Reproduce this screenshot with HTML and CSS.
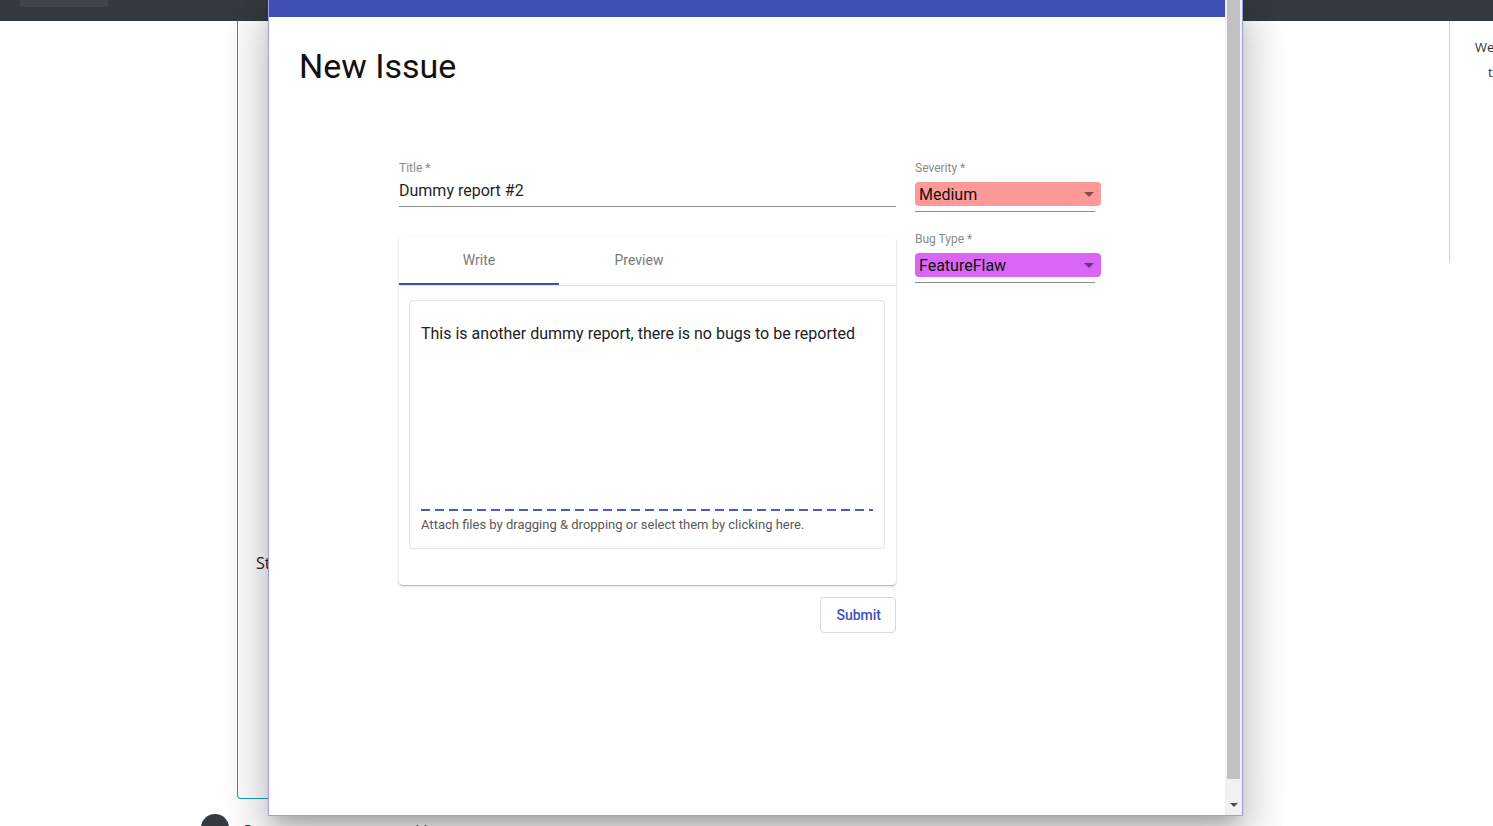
FILE: index.html
```html
<!DOCTYPE html>
<html lang="en">
<head>
<meta charset="utf-8">
<title>New Issue</title>
<link rel="stylesheet" href="styles.css">
</head>
<body>
  <header class="navbar"><div class="nav-item"></div></header>
  <div class="page">
    <div class="main">
      <div class="card">
        <p class="card-text">Status</p>
      </div>
      <div class="comment">
        <span class="avatar"></span>
        <span class="comment-text">Some users are now asking</span>
      </div>
    </div>
    <aside class="sidebar">
      <p class="side-line1">Welcome</p>
      <p class="side-line2">the</p>
    </aside>
  </div>

  <div class="modal">
    <div class="modal-content">
      <div class="modal-bar"></div>
      <h1 class="modal-title">New Issue</h1>
      <form class="issue-form">
        <div class="main-col">
          <label class="field-label">Title *</label>
          <div class="text-input">Dummy report #2</div>
          <div class="editor-paper">
            <div class="tabs">
              <div class="tab active">Write</div>
              <div class="tab">Preview</div>
            </div>
            <div class="editor">
              <div class="textarea">This is another dummy report, there is no bugs to be reported</div>
              <div class="drop-line"></div>
              <div class="attach">Attach files by dragging &amp; dropping or select them by clicking here.</div>
            </div>
          </div>
          <div class="actions">
            <button type="button" class="submit-btn">Submit</button>
          </div>
        </div>
        <div class="side-col">
          <div class="select-field">
            <label class="field-label">Severity *</label>
            <div class="select-box severity">
              <span>Medium</span>
              <svg class="caret" width="10" height="5" viewBox="0 0 10 5"><path d="M0 0h10L5 5z"/></svg>
            </div>
            <div class="select-underline"></div>
          </div>
          <div class="select-field">
            <label class="field-label">Bug Type *</label>
            <div class="select-box bugtype">
              <span>FeatureFlaw</span>
              <svg class="caret" width="10" height="5" viewBox="0 0 10 5"><path d="M0 0h10L5 5z"/></svg>
            </div>
            <div class="select-underline"></div>
          </div>
        </div>
      </form>
    </div>
    <div class="scrollbar">
      <div class="thumb"></div>
      <svg class="scroll-arrow" width="8" height="4" viewBox="0 0 8 4"><path d="M0 0h8L4 4z"/></svg>
    </div>
  </div>
</body>
</html>
```

FILE: styles.css
```css
html, body {
  margin: 0;
  padding: 0;
}
body {
  width: 1493px;
  height: 826px;
  overflow: hidden;
  background: #fff;
  font-family: Roboto, "Liberation Sans", sans-serif;
  position: relative;
}

/* background page */
.navbar {
  height: 21px;
  background: #343a40;
}
.nav-item {
  margin-left: 20px;
  width: 88px;
  height: 7px;
  background: #40454d;
}
.page {
  display: flex;
  width: 1700px;
}
.main {
  flex-shrink: 0;
  margin-left: 201px;
  width: 1248px;
}
.card {
  margin-left: 36px;
  width: 900px;
  height: 778px;
  box-sizing: border-box;
  border: 1px solid #17a2b8;
  border-top: 0;
  border-radius: 0 0 4px 4px;
  overflow: hidden;
}
.card-text {
  margin: 530px 0 0 18px;
  font: 16px/24px "Open Sans", sans-serif;
  color: #212529;
}
.comment {
  display: flex;
  align-items: flex-start;
  gap: 14px;
  margin-top: 15px;
}
.avatar {
  width: 28px;
  height: 28px;
  border-radius: 50%;
  background: #343a40;
  flex-shrink: 0;
}
.comment-text {
  margin-top: 5px;
  font: 16px/24px "Open Sans", sans-serif;
  color: #212529;
  white-space: nowrap;
}
.sidebar {
  flex-shrink: 0;
  width: 200px;
  height: 241px;
  border-left: 1px solid #d4d4d4;
  font: 13px/25px "Open Sans", sans-serif;
  color: #333;
}
.sidebar p { margin: 0; white-space: nowrap; }
.side-line1 { padding: 14px 0 0 25px; }
.side-line2 { padding-left: 38px; }

/* modal */
.modal {
  position: absolute;
  left: 268px;
  top: 0;
  width: 973px;
  height: 815px;
  border: 1px solid #9f9de6;
  border-top: 0;
  background: #fff;
  display: flex;
  box-shadow: 0 11px 15px -7px rgba(0,0,0,0.2), 0 24px 38px 3px rgba(0,0,0,0.14), 0 9px 46px 8px rgba(0,0,0,0.12);
}
.modal-content {
  flex: 1;
  overflow: hidden;
}
.modal-bar {
  height: 17px;
  background: #3f51b5;
}
.modal-title {
  margin: 29px 0 0 30px;
  font: 400 34px/41px Roboto, sans-serif;
  color: #111;
}
.issue-form {
  display: grid;
  grid-template-columns: 497px 180px;
  column-gap: 19px;
  width: 696px;
  margin: 74px auto 0;
  align-items: start;
}
.field-label {
  display: block;
  font: 12px/14px Roboto, sans-serif;
  color: #8a8a8a;
}
.text-input {
  margin-top: 6px;
  font: 16px/19px Roboto, sans-serif;
  color: #1f1f1f;
  padding-bottom: 6px;
  border-bottom: 1px solid #8c8c8c;
}
.editor-paper {
  margin-top: 30px;
  border-radius: 4px;
  padding-bottom: 36px;
  box-shadow: 0 1px 3px rgba(0,0,0,0.18), 0 1px 1px rgba(0,0,0,0.1), 0 2px 1px -1px rgba(0,0,0,0.1);
}
.tabs {
  display: flex;
  border-bottom: 1px solid #e2e2e2;
}
.tab {
  width: 160px;
  height: 48px;
  box-sizing: border-box;
  display: flex;
  align-items: center;
  justify-content: center;
  font: 14px Roboto, sans-serif;
  color: #7a7a7a;
  border-bottom: 2px solid transparent;
}
.tab.active {
  border-bottom-color: #3f51b5;
}
.editor {
  margin: 14px 11px 0 10px;
  height: 249px;
  box-sizing: border-box;
  border: 1px solid #e1e1e1;
  border-radius: 4px;
  padding: 11px 11px 0;
}
.textarea {
  height: 187px;
  padding-top: 10px;
  font: 16px/24px Roboto, sans-serif;
  color: #222;
}
.drop-line {
  height: 2px;
  background: repeating-linear-gradient(90deg, #4a5cc0 0 9px, transparent 9px 14px);
}
.attach {
  margin-top: 5px;
  font: 13px/18px Roboto, sans-serif;
  color: #595959;
  white-space: nowrap;
}
.actions {
  display: flex;
  justify-content: flex-end;
  margin-top: 12px;
}
.submit-btn {
  height: 36px;
  padding: 0 14px 0 15px;
  border: 1px solid #d9d9d9;
  border-radius: 4px;
  background: #fff;
  color: #3f51b5;
  font: 500 14px Roboto, sans-serif;
  cursor: pointer;
}
.select-field + .select-field {
  margin-top: 20px;
}
.select-box {
  margin-top: 7px;
  width: 186px;
  height: 24px;
  box-sizing: border-box;
  border-radius: 4px;
  display: flex;
  align-items: center;
  justify-content: space-between;
  padding: 0 7px 0 4px;
  font: 16px Roboto, sans-serif;
  color: #111;
}
.select-box.severity { background: #ff9999; }
.select-box.bugtype { background: #d966f7; }
.caret path { fill: rgba(0,0,0,0.5); }
.select-underline {
  margin-top: 5px;
  border-bottom: 1px solid #8c8c8c;
}

/* scrollbar */
.scrollbar {
  width: 17px;
  background: #f1f1f1;
  display: flex;
  flex-direction: column;
  align-items: center;
}
.thumb {
  width: 13px;
  height: 779px;
  background: #c1c1c1;
}
.scroll-arrow {
  margin-top: 24px;
}
.scroll-arrow path { fill: #505050; }
```
